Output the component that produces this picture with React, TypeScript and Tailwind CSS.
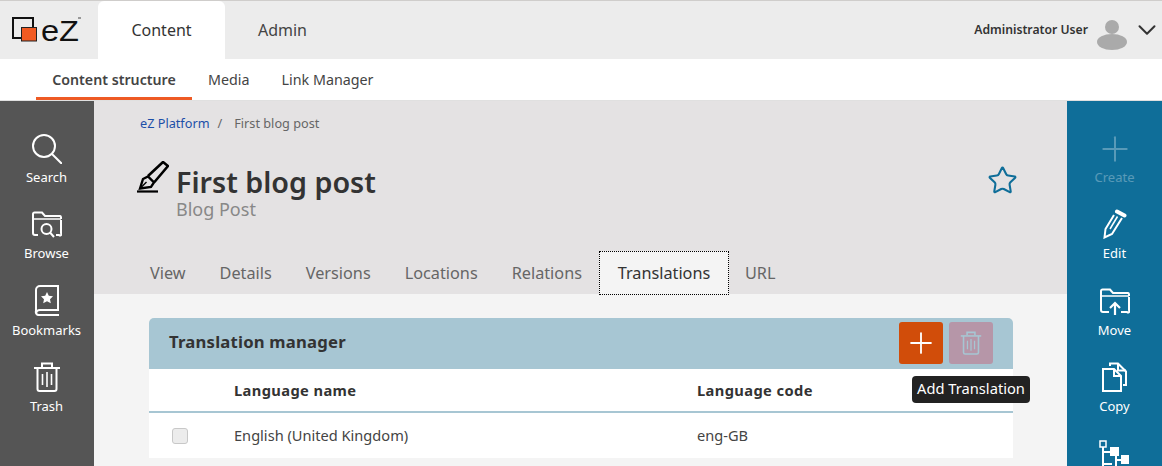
import { Plus, ChevronDown, Star } from 'lucide-react'

function TrashIcon({ className }: { className?: string }) {
  return (
    <svg viewBox="0 0 28 30" fill="none" stroke="currentColor" strokeWidth="2" className={className}>
      <path d="M1 6h26" />
      <path d="M9 5V1.500h10V5" />
      <path d="M4.500 6v21a2 2 0 0 0 2 2h15a2 2 0 0 0 2-2V6" />
      <path d="M9.500 12v11M14 10v15M18.500 12v11" strokeWidth="1.600" />
    </svg>
  )
}

function FolderBase({ children }: { children: React.ReactNode }) {
  return (
    <svg viewBox="0 0 30 28" fill="none" stroke="currentColor" strokeWidth="2" className="w-[30px] h-[28px]">
      <path d="M1 9V3a1.500 1.500 0 0 1 1.500-1.500h7.500l3 3.500h15a1.500 1.500 0 0 1 1 1.500V8" />
      <path d="M1 8h28" strokeWidth="1.500" />
      {children}
    </svg>
  )
}

function SideItem({ label, icon, dim }: { label: string; icon: React.ReactNode; dim?: boolean }) {
  return (
    <div className={`h-[76.400px] flex flex-col items-center ${dim ? 'opacity-30' : ''}`}>
      <div className="h-[36px] flex items-end justify-center">{icon}</div>
      <span className="text-[13px] leading-[18px] mt-[5px]">{label}</span>
    </div>
  )
}

const tabs = ['View', 'Details', 'Versions', 'Locations', 'Relations']

export default function App() {
  return (
    <div className="w-[1162px] h-[466px] overflow-hidden bg-[#f4f4f4] text-[#333] font-['Noto_Sans',sans-serif] flex flex-col">
      {/* Top bar */}
      <div className="h-[59px] shrink-0 bg-[#ececec] border-t border-[#cfcdcb] flex">
        <div className="w-[98px] flex items-center pl-[10px]">
          <svg viewBox="0 0 80 40" className="w-[80px] h-[40px]">
            <rect x="3" y="8" width="20" height="20" fill="none" stroke="#111" strokeWidth="2" />
            <rect x="11.500" y="17.500" width="15" height="13.500" fill="#f15a22" stroke="#222" strokeWidth="1" />
            <text x="31" y="31" fontSize="29" fill="#111" fontFamily="Liberation Sans, sans-serif" textLength="38" lengthAdjust="spacingAndGlyphs">eZ</text>
            <rect x="68" y="7" width="3" height="2" fill="#999" />
          </svg>
        </div>
        <div className="w-[127px] bg-white rounded-t-md flex items-center justify-center text-[16px] text-[#333]">Content</div>
        <div className="w-[115px] flex items-center justify-center text-[16px] text-[#444]">Admin</div>
        <div className="ml-auto flex items-center">
          <span className="text-[12.200px] font-semibold text-[#333] mr-[9px]">Administrator User</span>
          <svg viewBox="0 0 30 30" className="w-[30px] h-[30px] mr-[5px] mt-[10px]">
            <circle cx="15" cy="7" r="7" fill="#aaa" />
            <ellipse cx="15" cy="22" rx="15" ry="8" fill="#aaa" />
          </svg>
          <ChevronDown className="w-[30px] h-[30px] text-[#333]" strokeWidth={1.600} />
        </div>
      </div>

      {/* Sub nav */}
      <div className="h-[42px] shrink-0 bg-white border-b border-[#e0e0e0] flex pl-9 text-[14.300px] text-[#444]">
        <div className="w-[156px] h-[41px] border-b-[3px] border-[#ee5a24] flex items-center justify-center font-semibold text-[14.200px] pt-[3px]">
          Content structure
        </div>
        <div className="h-[41px] flex items-center ml-4">Media</div>
        <div className="h-[41px] flex items-center ml-8">Link Manager</div>
      </div>

      <div className="flex flex-1 min-h-0">
        {/* Left sidebar */}
        <div className="w-[94px] shrink-0 bg-[#555] text-white pt-[26px] pr-[1px]">
          <SideItem
            label="Search"
            icon={
              <svg viewBox="0 0 30 30" fill="none" stroke="currentColor" strokeWidth="2" className="w-[30px] h-[30px] -mb-[1px]">
                <circle cx="12" cy="12" r="11" />
                <path d="M20 20l9.500 9.500" strokeLinecap="round" />
              </svg>
            }
          />
          <SideItem
            label="Browse"
            icon={
              <FolderBase>
                <path d="M1 9v13a2 2 0 0 0 2 2h3M29 9v13a1 1 0 0 1-2 2h-3" />
                <circle cx="14.500" cy="18" r="5" />
                <path d="M18 21.500l4 4.500" />
              </FolderBase>
            }
          />
          <SideItem
            label="Bookmarks"
            icon={
              <svg viewBox="0 0 26 31" fill="none" stroke="currentColor" strokeWidth="2" className="w-[26px] h-[31px]">
                <path d="M6 1h18v24H6a4 4 0 0 0-4 3V5a4 4 0 0 1 4-4z" />
                <path d="M2 26a3 3 0 0 0 3 4h20" />
                <path d="M13 7l1.800 3.800 4.200.500-3 2.900.800 4.100-3.800-2-3.800 2 .800-4.100-3-2.900 4.200-.500z" fill="currentColor" stroke="none" />
              </svg>
            }
          />
          <SideItem label="Trash" icon={<TrashIcon className="w-[28px] h-[30px]" />} />
        </div>

        {/* Main */}
        <div className="flex-1 min-w-0 flex flex-col">
          <div className="h-[193px] shrink-0 bg-[#e4e2e3] flex flex-col">
            <div className="pl-[46px] pt-[13px] text-[12.700px] leading-[18px] flex">
              <span className="text-[#1c4fa8]">eZ Platform</span>
              <span className="text-[#666] ml-[8px]">/</span>
              <span className="text-[#666] ml-[12px]">First blog post</span>
            </div>
            <div className="flex pl-[43px] mt-[33px]">
              <svg viewBox="0 0 32 32" fill="none" stroke="#000" className="w-[32px] h-[32px] -mt-[4px] shrink-0">
                <path d="M0 30.500h21" strokeWidth="2.200" />
                <path d="M3 27.500l3-9.500 5-2.500 6 6-3 4.500z" strokeWidth="2.400" />
                <path d="M3 27.500l6.500-6.500" strokeWidth="1.500" />
                <path d="M11 15L26 1l5 4-13.500 16" strokeWidth="2.600" />
              </svg>
              <div className="ml-[7px] flex-1">
                <div className="text-[28.700px] leading-[32px] font-semibold text-[#333] mt-[1px]">First blog post</div>
                <div className="text-[18px] leading-[20px] text-[#888] mt-[1px]">Blog Post</div>
              </div>
              <Star className="w-[31px] h-[31px] text-[#0f6e99] mr-[49px]" strokeWidth={1.600} />
            </div>
            <div className="mt-auto flex pl-[39px] text-[16.250px] text-[#666] h-[43px] items-start">
              {tabs.map((t) => (
                <div key={t} className="h-[43px] pt-[1px] flex items-center px-[17px]">{t}</div>
              ))}
              <div className="h-[44px] w-[130px] flex items-center justify-center bg-[#f4f4f4] text-[#333] border border-dotted border-black">
                Translations
              </div>
              <div className="h-[43px] pt-[1px] flex items-center px-[16px]">URL</div>
            </div>
          </div>

          {/* Translation manager */}
          <div className="pl-[55px] pr-[54px] pt-[24px]">
            <div className="h-[51px] bg-[#a7c6d3] rounded-t-[5px] flex items-center pl-5 pr-5">
              <span className="text-[16.700px] font-bold tracking-[0.2px] text-[#333] -mt-[3px]">Translation manager</span>
              <div className="ml-auto flex gap-[6px] -mt-[1px]">
                <div className="w-[44px] h-[42px] bg-[#d14d0a] rounded-[3px] flex items-center justify-center text-white">
                  <Plus className="w-[34px] h-[34px]" strokeWidth={1.300} />
                </div>
                <div className="w-[44px] h-[42px] bg-[#b696a8] rounded-[3px] flex items-center justify-center text-[#a7c6d3]">
                  <TrashIcon className="w-[22px] h-[24px]" />
                </div>
              </div>
            </div>
            <div className="relative bg-white">
              <div className="h-[44px] border-b-2 border-[#a7c6d3] flex items-center text-[14.700px] font-bold tracking-[0.38px] text-[#333]">
                <span className="ml-[85px] w-[463px]">Language name</span>
                <span>Language code</span>
              </div>
              <div className="h-[45px] flex items-center text-[14.600px] text-[#444]">
                <span className="ml-[23px] w-[16px] h-[16px] bg-[#ececec] border border-[#c8c8c8] rounded-[3px]" />
                <span className="ml-[46px] w-[463px]">English (United Kingdom)</span>
                <span>eng-GB</span>
              </div>
              <div className="absolute left-[763px] top-[7px] w-[118px] h-[27px] bg-[#222] rounded-[4px] text-white text-[14.700px] pb-[2px] flex items-center justify-center whitespace-nowrap">
                Add Translation
              </div>
            </div>
          </div>
        </div>

        {/* Right sidebar */}
        <div className="w-[95px] shrink-0 bg-[#0f6e99] text-white pt-[26px]">
          <SideItem dim label="Create" icon={<Plus className="w-[40px] h-[40px] -mb-[6px]" strokeWidth={1.200} />} />
          <SideItem
            label="Edit"
            icon={
              <svg viewBox="0 0 24 30" fill="none" stroke="currentColor" strokeWidth="2" className="w-[24px] h-[30px]">
                <path d="M11 6L2.500 20l-1 8.500 7.500-3.500L19 9" />
                <path d="M14 2.500l7.500 4" strokeWidth="4" strokeLinecap="round" />
                <path d="M7 20l7.500-12.500" strokeWidth="1.500" />
              </svg>
            }
          />
          <SideItem
            label="Move"
            icon={
              <FolderBase>
                <path d="M1 9v13a2 2 0 0 0 2 2h6M29 9v13a1 1 0 0 1-2 2h-6" />
                <path d="M15 27V15M10 20l5-5 5 5" strokeWidth="2.200" />
              </FolderBase>
            }
          />
          <SideItem
            label="Copy"
            icon={
              <svg viewBox="0 0 27 30" fill="none" stroke="currentColor" strokeWidth="2" className="w-[27px] h-[30px]">
                <path d="M2 7h11l7 7v15H2z" />
                <path d="M13 7v7h7" />
                <path d="M9 4V1.500h8l8 8V23h-3" />
                <path d="M17 1.500v7h8" />
              </svg>
            }
          />
          <div className="flex justify-center mt-[7px]">
            <svg viewBox="0 0 30 30" fill="none" stroke="currentColor" strokeWidth="2" className="w-[30px] h-[30px] -ml-[2px]">
              <rect x="1" y="1" width="6" height="6" strokeWidth="1.500" />
              <path d="M4 7v23M4 12h9M4 24h9M17 15v14M17 20h6" />
              <rect x="12" y="8" width="7" height="7" fill="currentColor" />
              <rect x="23" y="16" width="7" height="7" fill="currentColor" />
            </svg>
          </div>
        </div>
      </div>
    </div>
  )
}
